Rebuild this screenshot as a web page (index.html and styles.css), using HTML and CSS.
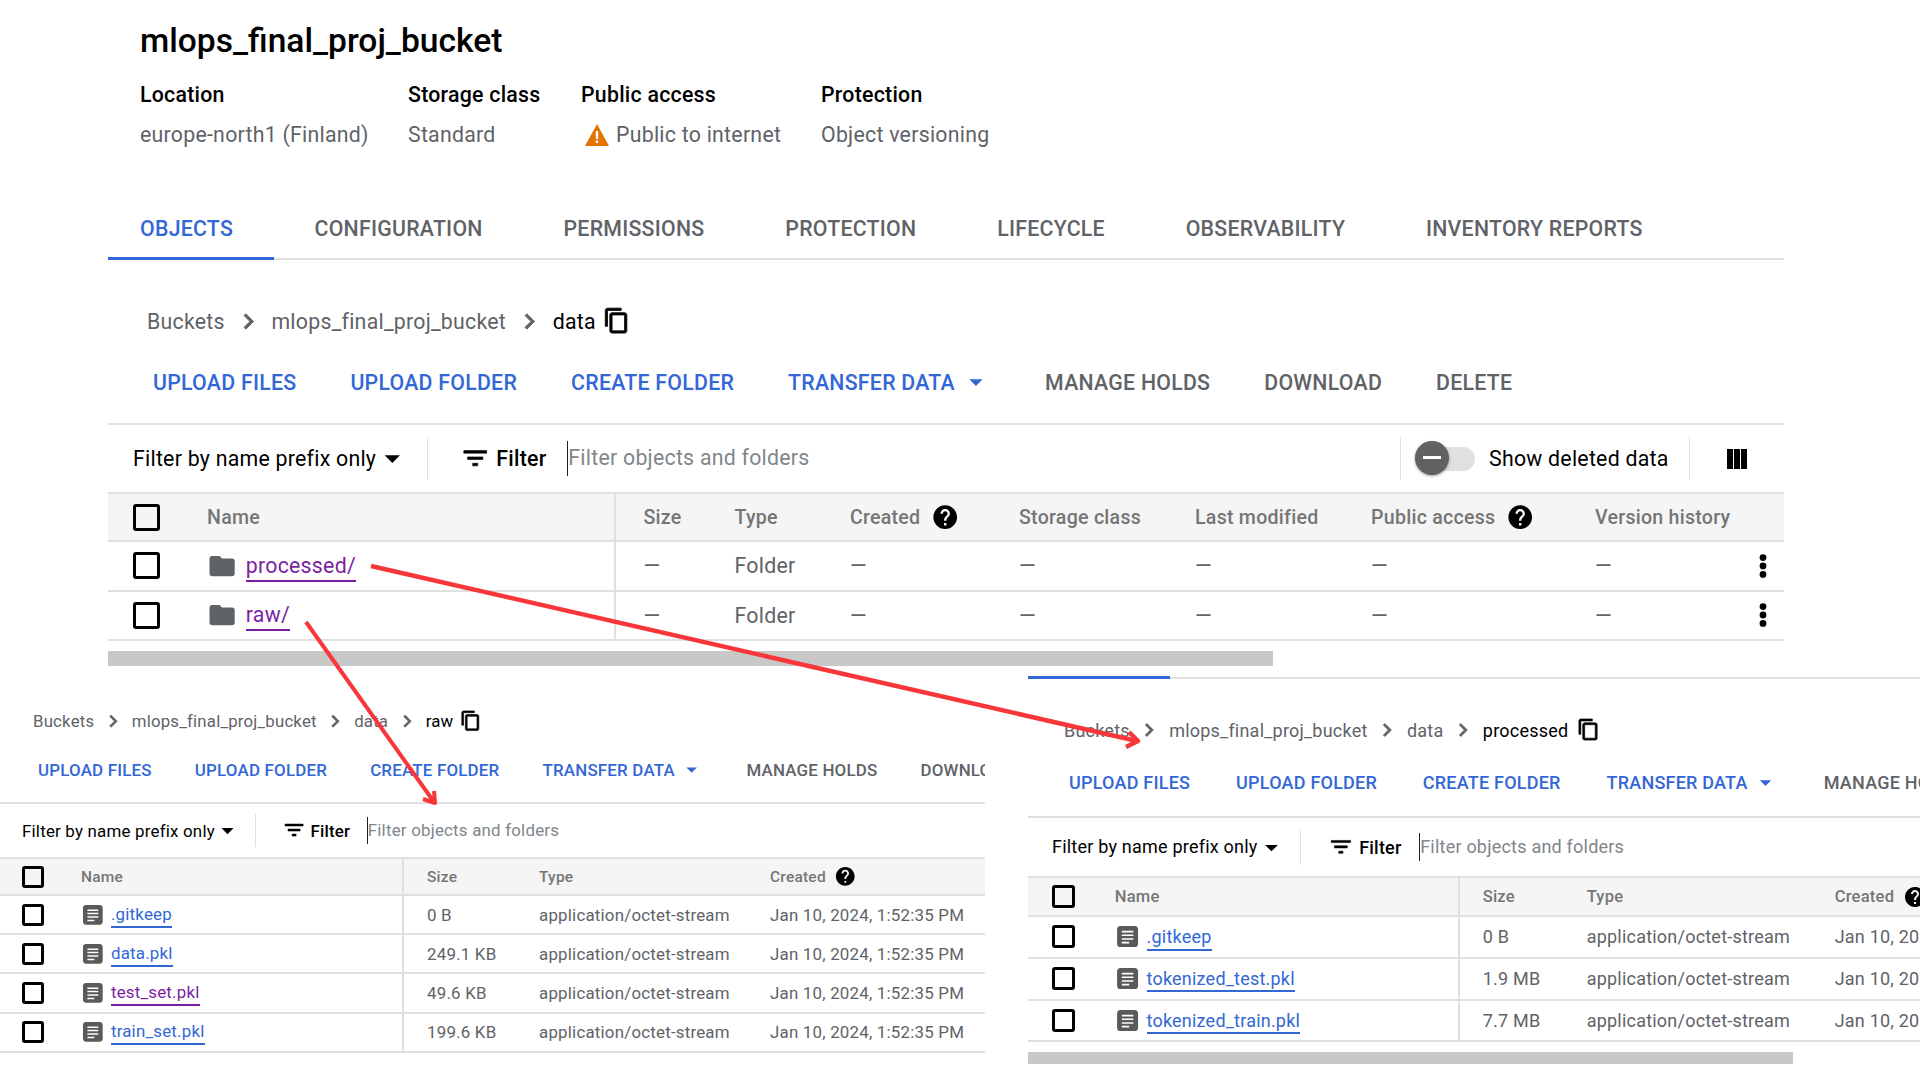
FILE: index.html
```html
<!DOCTYPE html>
<html lang="en">
<head>
<meta charset="utf-8">
<title>mlops_final_proj_bucket</title>
<link rel="stylesheet" href="styles.css">
</head>
<body>
<svg width="0" height="0" class="defs">
  <symbol id="i-chev" viewBox="0 0 24 24"><path d="M10 6L8.59 7.41 13.17 12l-4.58 4.59L10 18l6-6z"/></symbol>
  <symbol id="i-copy" viewBox="0 0 24 24"><path d="M16 1H4c-1.1 0-2 .9-2 2v14h2V3h12V1zm3 4H8c-1.1 0-2 .9-2 2v14c0 1.1.9 2 2 2h11c1.1 0 2-.9 2-2V7c0-1.1-.9-2-2-2zm0 16H8V7h11v14z"/></symbol>
  <symbol id="i-caret" viewBox="0 0 24 24"><path d="M7 10l5 5 5-5z"/></symbol>
  <symbol id="i-filter" viewBox="0 0 24 24"><path d="M10 18h4v-2h-4v2zM3 6v2h18V6H3zm3 7h12v-2H6v2z"/></symbol>
  <symbol id="i-help" viewBox="0 0 24 24"><path d="M12 2C6.48 2 2 6.48 2 12s4.48 10 10 10 10-4.48 10-10S17.52 2 12 2zm1 17h-2v-2h2v2zm2.07-7.75l-.9.92C13.45 12.9 13 13.5 13 15h-2v-.5c0-1.1.45-2.1 1.17-2.83l1.24-1.26c.37-.36.59-.86.59-1.41 0-1.1-.9-2-2-2s-2 .9-2 2H8c0-2.21 1.79-4 4-4s4 1.79 4 4c0 .88-.36 1.68-.93 2.25z"/></symbol>
  <symbol id="i-folder" viewBox="0 0 24 24"><path d="M10 4H4c-1.1 0-1.99.9-1.99 2L2 18c0 1.1.9 2 2 2h16c1.1 0 2-.9 2-2V8c0-1.1-.9-2-2-2h-8l-2-2z"/></symbol>
  <symbol id="i-file" viewBox="0 0 24 24"><path fill-rule="evenodd" d="M5 2h14c1.700 0 3 1.300 3 3v14c0 1.700-1.300 3-3 3H5c-1.700 0-3-1.300-3-3V5c0-1.700 1.300-3 3-3zm1.500 4.500v1.500h11V6.500h-11zm0 3.500v1.500h11V10h-11zm0 3.500v1.500h11v-1.500h-11zm0 3.500v1.500h7V17h-7z"/></symbol>
  <symbol id="i-more" viewBox="0 0 8 24"><circle cx="4" cy="3.600" r="3.400"/><circle cx="4" cy="12" r="3.400"/><circle cx="4" cy="20.400" r="3.400"/></symbol>
</svg>

<main class="canvas">
  <section class="panel panel-main">
    <header class="bucket-head">
      <h1 class="bucket-title">mlops_final_proj_bucket</h1>
      <dl class="meta">
        <div class="meta-item m-loc"><dt>Location</dt><dd>europe-north1 (Finland)</dd></div>
        <div class="meta-item m-cls"><dt>Storage class</dt><dd>Standard</dd></div>
        <div class="meta-item m-pub"><dt>Public access</dt><dd class="warn-value"><svg class="warn" viewBox="0 0 24 22"><path d="M12 0L24 22H0z" fill="#e37400"/><rect x="10.800" y="7" width="2.400" height="8" fill="#fff"/><rect x="10.800" y="16.500" width="2.400" height="2.500" fill="#fff"/></svg>Public to internet</dd></div>
        <div class="meta-item"><dt>Protection</dt><dd>Object versioning</dd></div>
      </dl>
    </header>
    <nav class="tabs">
      <a class="tab tab-active">OBJECTS</a><a class="tab">CONFIGURATION</a><a class="tab">PERMISSIONS</a><a class="tab">PROTECTION</a><a class="tab">LIFECYCLE</a><a class="tab">OBSERVABILITY</a><a class="tab">INVENTORY REPORTS</a>
    </nav>
    <div class="crumbs">
      <span class="crumb">Buckets</span><svg class="chev"><use href="#i-chev"/></svg>
      <span class="crumb">mlops_final_proj_bucket</span><svg class="chev"><use href="#i-chev"/></svg>
      <span class="crumb crumb-now">data</span><svg class="copy"><use href="#i-copy"/></svg>
    </div>
    <div class="actions">
      <a class="act">UPLOAD FILES</a><a class="act">UPLOAD FOLDER</a><a class="act">CREATE FOLDER</a>
      <a class="act act-menu">TRANSFER DATA<svg class="act-caret"><use href="#i-caret"/></svg></a>
      <a class="act act-off">MANAGE HOLDS</a><a class="act act-off">DOWNLOAD</a><a class="act act-off">DELETE</a>
    </div>
    <div class="filterbar">
      <span class="prefix">Filter by name prefix only<svg class="prefix-caret"><use href="#i-caret"/></svg></span>
      <span class="vr"></span>
      <svg class="filter-ic"><use href="#i-filter"/></svg><span class="filter-lbl">Filter</span>
      <span class="filter-input">Filter objects and folders</span>
      <span class="vr vr-right"></span>
      <span class="toggle"><span class="toggle-thumb"></span></span>
      <span class="toggle-lbl">Show deleted data</span>
      <span class="vr"></span>
      <svg class="cols-ic" viewBox="0 0 20 20"><rect width="6" height="20"/><rect x="7" width="6" height="20"/><rect x="14" width="6" height="20"/></svg>
    </div>
    <div class="table">
      <div class="row row-head">
        <span class="c-check"><i class="box"></i></span><span class="c-name">Name</span><span class="c-size">Size</span><span>Type</span>
        <span class="c-help">Created<svg class="help"><use href="#i-help"/></svg></span><span>Storage class</span><span>Last modified</span>
        <span class="c-help">Public access<svg class="help"><use href="#i-help"/></svg></span><span>Version history</span><span></span>
      </div>
      <div class="row">
        <span class="c-check"><i class="box"></i></span><span class="c-name"><svg class="ic-folder"><use href="#i-folder"/></svg><a class="link link-v">processed/</a></span><span class="c-size">—</span><span>Folder</span><span>—</span><span>—</span><span>—</span><span>—</span><span>—</span><svg class="more"><use href="#i-more"/></svg>
      </div>
      <div class="row">
        <span class="c-check"><i class="box"></i></span><span class="c-name"><svg class="ic-folder"><use href="#i-folder"/></svg><a class="link link-v">raw/</a></span><span class="c-size">—</span><span>Folder</span><span>—</span><span>—</span><span>—</span><span>—</span><span>—</span><svg class="more"><use href="#i-more"/></svg>
      </div>
    </div>
    <div class="scrollbar"></div>
  </section>

  <section class="panel panel-raw">
    <div class="crumbs">
      <span class="crumb">Buckets</span><svg class="chev"><use href="#i-chev"/></svg>
      <span class="crumb">mlops_final_proj_bucket</span><svg class="chev"><use href="#i-chev"/></svg>
      <span class="crumb">data</span><svg class="chev"><use href="#i-chev"/></svg>
      <span class="crumb crumb-now">raw</span><svg class="copy"><use href="#i-copy"/></svg>
    </div>
    <div class="actions">
      <a class="act">UPLOAD FILES</a><a class="act">UPLOAD FOLDER</a><a class="act">CREATE FOLDER</a>
      <a class="act act-menu">TRANSFER DATA<svg class="act-caret"><use href="#i-caret"/></svg></a>
      <a class="act act-off">MANAGE HOLDS</a><a class="act act-off">DOWNLOAD</a>
    </div>
    <div class="filterbar">
      <span class="prefix">Filter by name prefix only<svg class="prefix-caret"><use href="#i-caret"/></svg></span>
      <span class="vr"></span>
      <svg class="filter-ic"><use href="#i-filter"/></svg><span class="filter-lbl">Filter</span>
      <span class="filter-input">Filter objects and folders</span>
    </div>
    <div class="table">
      <div class="row row-head">
        <span class="c-check"><i class="box"></i></span><span class="c-name">Name</span><span class="c-size">Size</span><span>Type</span>
        <span class="c-help">Created<svg class="help"><use href="#i-help"/></svg></span>
      </div>
      <div class="row"><span class="c-check"><i class="box"></i></span><span class="c-name"><svg class="ic-file"><use href="#i-file"/></svg><a class="link">.gitkeep</a></span><span class="c-size">0 B</span><span>application/octet-stream</span><span>Jan 10, 2024, 1:52:35 PM</span></div>
      <div class="row"><span class="c-check"><i class="box"></i></span><span class="c-name"><svg class="ic-file"><use href="#i-file"/></svg><a class="link">data.pkl</a></span><span class="c-size">249.1 KB</span><span>application/octet-stream</span><span>Jan 10, 2024, 1:52:35 PM</span></div>
      <div class="row"><span class="c-check"><i class="box"></i></span><span class="c-name"><svg class="ic-file"><use href="#i-file"/></svg><a class="link link-v">test_set.pkl</a></span><span class="c-size">49.6 KB</span><span>application/octet-stream</span><span>Jan 10, 2024, 1:52:35 PM</span></div>
      <div class="row"><span class="c-check"><i class="box"></i></span><span class="c-name"><svg class="ic-file"><use href="#i-file"/></svg><a class="link">train_set.pkl</a></span><span class="c-size">199.6 KB</span><span>application/octet-stream</span><span>Jan 10, 2024, 1:52:35 PM</span></div>
    </div>
  </section>

  <section class="panel panel-processed">
    <div class="tabs tabs-stub"><span class="tab-stub"></span></div>
    <div class="crumbs">
      <span class="crumb">Buckets</span><svg class="chev"><use href="#i-chev"/></svg>
      <span class="crumb">mlops_final_proj_bucket</span><svg class="chev"><use href="#i-chev"/></svg>
      <span class="crumb">data</span><svg class="chev"><use href="#i-chev"/></svg>
      <span class="crumb crumb-now">processed</span><svg class="copy"><use href="#i-copy"/></svg>
    </div>
    <div class="actions">
      <a class="act">UPLOAD FILES</a><a class="act">UPLOAD FOLDER</a><a class="act">CREATE FOLDER</a>
      <a class="act act-menu">TRANSFER DATA<svg class="act-caret"><use href="#i-caret"/></svg></a>
      <a class="act act-off">MANAGE HOLDS</a>
    </div>
    <div class="filterbar">
      <span class="prefix">Filter by name prefix only<svg class="prefix-caret"><use href="#i-caret"/></svg></span>
      <span class="vr"></span>
      <svg class="filter-ic"><use href="#i-filter"/></svg><span class="filter-lbl">Filter</span>
      <span class="filter-input">Filter objects and folders</span>
    </div>
    <div class="table">
      <div class="row row-head">
        <span class="c-check"><i class="box"></i></span><span class="c-name">Name</span><span class="c-size">Size</span><span>Type</span>
        <span class="c-help">Created<svg class="help"><use href="#i-help"/></svg></span>
      </div>
      <div class="row"><span class="c-check"><i class="box"></i></span><span class="c-name"><svg class="ic-file"><use href="#i-file"/></svg><a class="link">.gitkeep</a></span><span class="c-size">0 B</span><span>application/octet-stream</span><span>Jan 10, 2024, 1:52:35 PM</span></div>
      <div class="row"><span class="c-check"><i class="box"></i></span><span class="c-name"><svg class="ic-file"><use href="#i-file"/></svg><a class="link">tokenized_test.pkl</a></span><span class="c-size">1.9 MB</span><span>application/octet-stream</span><span>Jan 10, 2024, 1:52:35 PM</span></div>
      <div class="row"><span class="c-check"><i class="box"></i></span><span class="c-name"><svg class="ic-file"><use href="#i-file"/></svg><a class="link">tokenized_train.pkl</a></span><span class="c-size">7.7 MB</span><span>application/octet-stream</span><span>Jan 10, 2024, 1:52:35 PM</span></div>
    </div>
    <div class="scrollbar"></div>
  </section>

  <svg class="arrows" viewBox="0 0 1920 1080">
    <path class="arrow-line" d="M371 566L1137 741"/>
    <path class="arrow-line" d="M1129 732L1138 741L1126 747"/>
    <path class="arrow-line arrow-thin" d="M306 622L434 802"/>
    <path class="arrow-line arrow-thin" d="M434 791L435 803L423 799"/>
  </svg>
</main>
</body>
</html>
```
FILE: styles.css
```css
* { box-sizing: border-box; }
html, body { margin: 0; padding: 0; background: #fff; }
body { font-family: Roboto, "Liberation Sans", sans-serif; color: #5f6368; overflow: hidden; }
.defs { position: absolute; }
.canvas { position: relative; width: 1920px; height: 1080px; overflow: hidden; }
svg { fill: currentColor; flex: none; }

/* Panels are separate screenshots pasted on a free canvas */
.panel { position: absolute; overflow: hidden; font-size: var(--fs); letter-spacing: .012em; }
.panel-main {
  left: 108px; top: 0; width: 1676px; height: 670px;
  --fs: 21.300px; --row: 49.500px; --head: 48px; --cb: 27px; --cb-b: 3px; --act-gap: 2.535em;
  --cols: 99px 408.500px 119px 115.500px 169px 176px 176px 224px 156px 33px;
  --check-pad: 25px; --size-pad: 28px;
}
.panel-raw {
  left: 0; top: 690px; width: 985px; height: 370px;
  --fs: 16.900px; --row: 39.200px; --head: 37px; --cb: 22px; --cb-b: 3px; --act-gap: 2.550em;
  --cols: 81px 323px 135px 231px 215px;
  --check-pad: 22px; --size-pad: 23px;
}
.panel-processed {
  left: 1028px; top: 670px; width: 892px; height: 400px;
  --fs: 18px; --row: 41.800px; --head: 39px; --cb: 23px; --cb-b: 3px; --act-gap: 2.550em;
  --cols: 86.700px 345px 127px 248px 200px;
  --check-pad: 24px; --size-pad: 23px;
}

/* Bucket head (main panel only) */
.bucket-head { padding: 17px 0 0 32px; }
.bucket-title { margin: 0; font-size: 33.600px; font-weight: 500; line-height: 48px; color: #000; letter-spacing: 0; }
.meta { display: flex; margin: 10px 0 0; }
.meta-item { display: flex; flex-direction: column; }
.m-loc { width: 268px; }
.m-cls { width: 173px; }
.m-pub { width: 240px; }
.meta dt { line-height: 40px; font-weight: 500; color: #000; height: 40px; }
.meta dd { margin: 0; line-height: 40px; height: 40px; }
.warn-value { display: flex; align-items: center; }
.warn { width: 24px; height: 22px; margin: 0 7px 0 4px; }

.tabs { display: flex; margin-top: 53px; height: 52px; border-bottom: 2px solid #e0e0e0; }
.tab { padding: 0 40.400px; line-height: 42px; height: 52px; font-weight: 500; color: #5f6368; white-space: nowrap; }
.tab-active { color: #3367d6; border-bottom: 3px solid #3367d6; padding: 0 41px 0 32px; }
.tabs-stub { margin: 0; height: 9px; position: relative; }
.tab-stub { position: absolute; left: 0; bottom: -2px; width: 142px; height: 3px; background: #3367d6; }

.crumbs { display: flex; align-items: center; }
.crumb { white-space: nowrap; }
.crumb-now { color: #000; }
.chev { width: 1.450em; height: 1.450em; margin: 0 .37em; color: #5f6368; stroke: currentColor; stroke-width: .7; }
.copy { width: 1.280em; height: 1.280em; color: #000; margin-left: .33em; stroke: currentColor; stroke-width: .7; }

.actions { display: flex; align-items: center; border-bottom: 2px solid #e0e0e0; white-space: nowrap; }
.act { font-weight: 500; color: #3367d6; margin-right: var(--act-gap); display: flex; align-items: center; }
.act-off { color: #5f6368; }
.act-caret { width: 1.500em; height: 1.500em; margin-left: .25em; margin-right: -.5em; }
.act-menu { margin-right: 2.980em; }

.filterbar { display: flex; align-items: center; white-space: nowrap; color: #000; }
.prefix { display: flex; align-items: center; width: 13.800em; }
.prefix-caret { width: 1.720em; height: 1.720em; margin-left: -.1em; }
.vr { width: 1px; height: 2em; background: #e0e0e0; }
.filter-ic { width: 1.430em; height: 1.430em; margin-left: 1.500em; stroke: currentColor; stroke-width: .5; }
.filter-lbl { font-weight: 500; margin-left: .28em; }
.filter-input { color: #80868b; margin-left: .98em; border-left: 1.500px solid #202124; line-height: 1.600em; }

.panel-main .crumbs { padding-left: 39px; height: 58px; margin-top: 32px; }
.panel-main .actions { padding: 0 0 9px 45px; height: 75px; }
.panel-main .filterbar { padding-left: 25px; height: 67px; }
.panel-main .filter-input { flex: 1; }
.toggle { width: 60px; height: 24px; border-radius: 12px; background: #e0e0e0; position: relative; margin: 0 14px 0 14px; }
.toggle-thumb { position: absolute; left: 0; top: -6px; width: 34px; height: 34px; border-radius: 50%; background: #616161; box-shadow: 0 1px 3px rgba(0,0,0,.4); }
.toggle-thumb::after { content: ""; position: absolute; left: 8px; right: 8px; top: 15.500px; height: 3px; background: #fff; }
.toggle-lbl { width: 200px; }
.cols-ic { width: 20px; height: 20px; color: #000; margin: 0 37px; }

.panel-raw .crumbs { padding-left: 33px; height: 62px; font-size: 16.800px; }
.panel-raw .chev { margin: 0 .39em; }
.panel-raw .copy { margin-left: .4em; }
.panel-raw .actions { padding: 0 0 15px 38px; height: 52px; }
.panel-raw .filterbar { padding-left: 22px; height: 53px; }
.panel-processed .crumbs { padding: 29px 0 0 36px; height: 73px; }
.panel-processed .copy { margin-left: .5em; }
.panel-processed .actions { padding: 0 0 3px 41px; height: 66px; }
.panel-processed .filterbar { padding-left: 24px; height: 58px; }

/* Table */
.table { border-top: 2px solid #e0e0e0; }
.row { display: grid; grid-template-columns: var(--cols); align-items: center; height: var(--row); border-bottom: 2px solid #e0e0e0; white-space: nowrap; }
.row > span { height: 100%; display: flex; align-items: center; }
.row-head { height: var(--head); background: #f5f5f5; font-weight: 500; color: #757575; font-size: .92em; }
.c-check { padding-left: var(--check-pad); }
.box { display: block; width: var(--cb); height: var(--cb); border: var(--cb-b) solid #000; border-radius: 3px; background: #fff; }
.row-head .box { background: transparent; }
.c-name { border-right: 2px solid #e0e0e0; }
.c-size { padding-left: var(--size-pad); }
.c-help .help { width: 1.450em; height: 1.450em; margin-left: .55em; color: #000; }
.ic-folder { width: 1.420em; height: 1.420em; margin: 0 .42em 0 -.02em; color: #5f6368; }
.ic-file { width: 1.400em; height: 1.400em; margin: 0 .37em 0 0; color: #5a5a5a; }
.link { color: #3367d6; border-bottom: 2px solid #3367d6; line-height: 1.300em; padding-top: 2px; }
.link-v { color: #7b1fa2; border-color: #7b1fa2; }
.more { width: 8px; height: 24px; color: #000; justify-self: start; margin-left: 8px; }

.scrollbar { background: #c8c8c8; }
.panel-main .scrollbar { width: 1165px; height: 15px; margin-top: 10px; }
.panel-processed .scrollbar { width: 765px; height: 12px; margin-top: 10px; }

/* Annotation arrows */
.arrows { position: absolute; left: 0; top: 0; width: 1920px; height: 1080px; pointer-events: none; }
.arrow-line { fill: none; stroke: #f8373a; stroke-width: 4.500; stroke-linejoin: round; }
.arrow-thin { stroke-width: 4; }
```
